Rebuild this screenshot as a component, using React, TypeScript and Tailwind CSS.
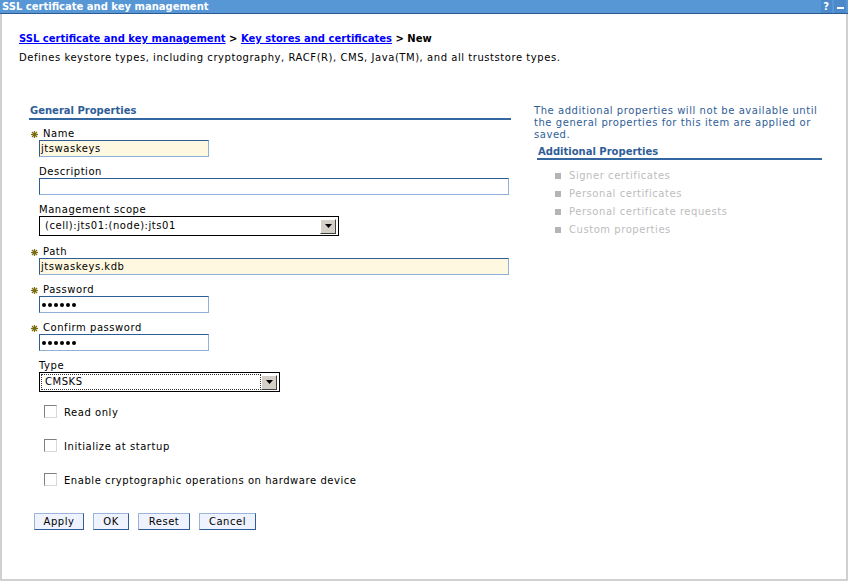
import React from 'react';

const font = { fontFamily: '"DejaVu Sans", Verdana, sans-serif' };

// small olive asterisk used to mark required fields
const RequiredStar = () => (
    <svg width="7" height="7" viewBox="0 0 7 7" className="shrink-0">
        <g stroke="#7a6a10" strokeWidth="1.2">
            <line x1="3.5" y1="0" x2="3.5" y2="7" />
            <line x1="0" y1="3.5" x2="7" y2="3.5" />
            <line x1="1" y1="1" x2="6" y2="6" />
            <line x1="6" y1="1" x2="1" y2="6" />
        </g>
    </svg>
);

const FieldLabel = ({ text, required }: { text: string; required?: boolean }) =>
    required ? (
        <div className="flex items-center gap-[5px] pl-[2px] h-[12px] leading-[12px] text-black">
            <RequiredStar />
            <span>{text}</span>
        </div>
    ) : (
        <div className="pl-[10px] h-[12px] leading-[12px] text-black">{text}</div>
    );

const TextBox = ({ value, width, filled }: { value: string; width: string; filled?: boolean }) => (
    <div
        className={`ml-[10px] h-[17px] ${width} border border-t-[#2f5e97] border-l-[#2f5e97] border-b-[#8fb0d8] border-r-[#8fb0d8] ${filled ? 'bg-[#fff8e1]' : 'bg-white'} pl-[1px] leading-[15px] text-black`}
    >
        {value}
    </div>
);

const Dots = ({ count }: { count: number }) => (
    <div className="flex items-center gap-[2px] h-full pl-[2px]">
        {Array.from({ length: count }).map((_, i) => (
            <span key={i} className="w-[4px] h-[4px] rounded-full bg-black" />
        ))}
    </div>
);

const DropButton = () => (
    <div className="w-[16px] h-[15px] bg-[#d4d0c8] border border-t-white border-l-white border-b-[#404040] border-r-[#404040] flex items-center justify-center">
        <svg width="7" height="4" viewBox="0 0 7 4">
            <polygon points="0,0 7,0 3.5,4" fill="#000" />
        </svg>
    </div>
);

const SelectBox = ({ value, width, focused }: { value: string; width: string; focused?: boolean }) => (
    <div className={`ml-[10px] h-[20px] ${width} border border-black bg-white flex items-center pl-[2px] pr-[2px] gap-[1px]`}>
        <div
            className={`flex-1 h-[14px] leading-[14px] pl-[3px] text-black ${focused ? 'outline outline-1 outline-dotted outline-[#333]' : ''}`}
        >
            {value}
        </div>
        <DropButton />
    </div>
);

const CheckRow = ({ label }: { label: string }) => (
    <div className="flex items-start ml-[15px] h-[13px]">
        <div className="w-[13px] h-[13px] border border-t-[#808080] border-l-[#808080] border-b-[#d8d8d8] border-r-[#d8d8d8] bg-white" />
        <span className="ml-[7px] mt-[2px] leading-[12px] text-black">{label}</span>
    </div>
);

const Btn = ({ label, width }: { label: string; width: string }) => (
    <button
        className={`${width} h-[17px] bg-[#eef3ff] border border-t-[#9bb5d8] border-l-[#9bb5d8] border-b-[#2f5e97] border-r-[#2f5e97] leading-[14px] text-black text-center p-0`}
    >
        {label}
    </button>
);

const additional = ['Signer certificates', 'Personal certificates', 'Personal certificate requests', 'Custom properties'];

export default function App() {
    return (
        <div className="w-[850px] h-[583px] bg-white text-[10px] tracking-[0.55px] overflow-hidden" style={font}>
            <div className="w-[848px] h-[581px] border-2 border-t-0 border-[#d0d0d0] flex flex-col">
                {/* title bar */}
                <div className="h-[14px] -mx-[2px] bg-[#5897d6] border-b border-[#2a5a90] flex items-center justify-between">
                    <span className="pl-[2px] font-bold tracking-normal text-white leading-[13px]">SSL certificate and key management</span>
                    <div className="flex gap-[2px] pr-[2px] h-full">
                        <div className="w-[11px] h-full bg-[#4c8acb] text-white font-bold leading-[13px] text-center">?</div>
                        <div className="w-[12px] h-full bg-[#4c8acb] flex items-center justify-center">
                            <div className="w-[7px] h-[2px] bg-white mt-[2px]" />
                        </div>
                    </div>
                </div>

                <div className="pl-[17px]">
                    <div className="mt-[19px] leading-[12px] font-bold tracking-normal text-black">
                        <span className="text-[#0000ff] underline">SSL certificate and key management</span>
                        {' > '}
                        <span className="text-[#0000ff] underline">Key stores and certificates</span>
                        {' > New'}
                    </div>
                    <div className="mt-[7px] leading-[12px] text-black">
                        Defines keystore types, including cryptography, RACF(R), CMS, Java(TM), and all truststore types.
                    </div>

                    <div className="flex mt-[41px]">
                        {/* general properties */}
                        <div className="ml-[10px] w-[482px] flex flex-col">
                            <div className="h-[13px] leading-[12px] pl-[1px] font-bold tracking-normal text-[#2f5e97] border-b-2 border-[#3466a0] box-content">
                                General Properties
                            </div>

                            <div className="mt-[8px]">
                                <FieldLabel text="Name" required />
                                <TextBox value="jtswaskeys" width="w-[170px]" filled />
                            </div>
                            <div className="mt-[9px]">
                                <FieldLabel text="Description" />
                                <TextBox value="" width="w-[470px]" />
                            </div>
                            <div className="mt-[9px]">
                                <FieldLabel text="Management scope" />
                                <SelectBox value="(cell):jts01:(node):jts01" width="w-[300px]" />
                            </div>
                            <div className="mt-[10px]">
                                <FieldLabel text="Path" required />
                                <TextBox value="jtswaskeys.kdb" width="w-[470px]" filled />
                            </div>
                            <div className="mt-[9px]">
                                <FieldLabel text="Password" required />
                                <div className="ml-[10px] w-[170px] h-[17px] border border-t-[#2f5e97] border-l-[#2f5e97] border-b-[#8fb0d8] border-r-[#8fb0d8] bg-white">
                                    <Dots count={6} />
                                </div>
                            </div>
                            <div className="mt-[9px]">
                                <FieldLabel text="Confirm password" required />
                                <div className="ml-[10px] w-[170px] h-[17px] border border-t-[#2f5e97] border-l-[#2f5e97] border-b-[#8fb0d8] border-r-[#8fb0d8] bg-white">
                                    <Dots count={6} />
                                </div>
                            </div>
                            <div className="mt-[9px]">
                                <FieldLabel text="Type" />
                                <SelectBox value="CMSKS" width="w-[241px]" focused />
                            </div>

                            <div className="mt-[13px] flex flex-col gap-[21px]">
                                <CheckRow label="Read only" />
                                <CheckRow label="Initialize at startup" />
                                <CheckRow label="Enable cryptographic operations on hardware device" />
                            </div>

                            <div className="mt-[27px] ml-[5px] flex gap-[9px]">
                                <Btn label="Apply" width="w-[50px]" />
                                <Btn label="OK" width="w-[36px]" />
                                <Btn label="Reset" width="w-[52px]" />
                                <Btn label="Cancel" width="w-[57px]" />
                            </div>
                        </div>

                        {/* additional properties */}
                        <div className="ml-[23px] w-[300px] flex flex-col">
                            <div className="leading-[12px] text-[#2f5e97]">
                                The additional properties will not be available until
                                <br />
                                the general properties for this item are applied or
                                <br />
                                saved.
                            </div>
                            <div className="ml-[3px] mt-[5px] w-[285px] h-[14px] leading-[12px] pl-[1px] font-bold tracking-normal text-[#2f5e97] border-b-2 border-[#3466a0]">
                                Additional Properties
                            </div>
                            <ul className="mt-[7px] ml-[21px]">
                                {additional.map(item => (
                                    <li key={item} className="flex items-center h-[18px] text-[#bdbdbd]">
                                        <span className="w-[6px] h-[6px] bg-[#b5b5b5]" />
                                        <span className="ml-[8px] leading-[18px]">{item}</span>
                                    </li>
                                ))}
                            </ul>
                        </div>
                    </div>
                </div>
            </div>
        </div>
    );
}
